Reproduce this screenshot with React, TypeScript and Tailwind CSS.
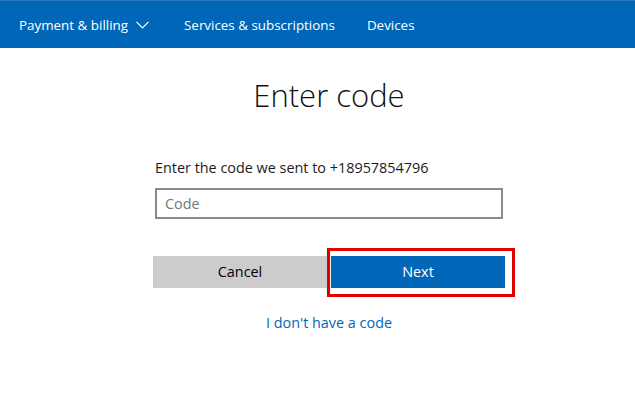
const font = { fontFamily: '"Open Sans", "Noto Sans", sans-serif' };

function TopNav() {
  return (
    <nav className="flex h-[48px] items-center border-t border-[#2b7cc4] bg-[#0067b8] pl-[19px] pt-[2px] text-[13.4px] text-white">
      <span className="flex items-center">
        Payment &amp; billing
        <svg className="ml-[8px] h-[8px] w-[13px]" viewBox="0 0 13 8" fill="none" stroke="currentColor" strokeWidth="1.2">
          <path d="M0.5 0.8 L6.5 6.8 L12.5 0.8" />
        </svg>
      </span>
      <span className="ml-[35px]">Services &amp; subscriptions</span>
      <span className="ml-[32px]">Devices</span>
    </nav>
  );
}

export default function App() {
  return (
    <div className="min-h-screen bg-white text-[#1b1b1b]" style={font}>
      <TopNav />
      <main className="pl-[153px]">
        <div className="w-[352px]">
          <h1 className="mt-[24px] text-center text-[31px] font-light leading-[46px] text-[#111]">Enter code</h1>
          <p className="mt-[40px] px-[2px] text-[14.4px] leading-[20px]">Enter the code we sent to +18957854796</p>
          <input
            className="mx-[2px] mt-[10px] block h-[31px] w-[348px] border-2 border-[#8a8a8a] px-[8px] text-[14.4px] outline-none placeholder:text-[#767676]"
            placeholder="Code"
          />
          <div className="mt-[37px] grid grid-cols-2 gap-[4px]">
            <button className="h-[32px] bg-[#cccccc] text-[14.4px] text-black">Cancel</button>
            <div className="relative">
              <button className="h-[32px] w-full bg-[#0067b8] text-[14.4px] text-white">Next</button>
              <div className="pointer-events-none absolute -top-[8px] -left-[4px] h-[49px] w-[188px] border-[3px] border-[#e00000]" />
            </div>
          </div>
          <p className="mt-[25px] text-center text-[14.4px] leading-[20px]">
            <a className="text-[#0067b8]" href="#">I don't have a code</a>
          </p>
        </div>
      </main>
    </div>
  );
}
